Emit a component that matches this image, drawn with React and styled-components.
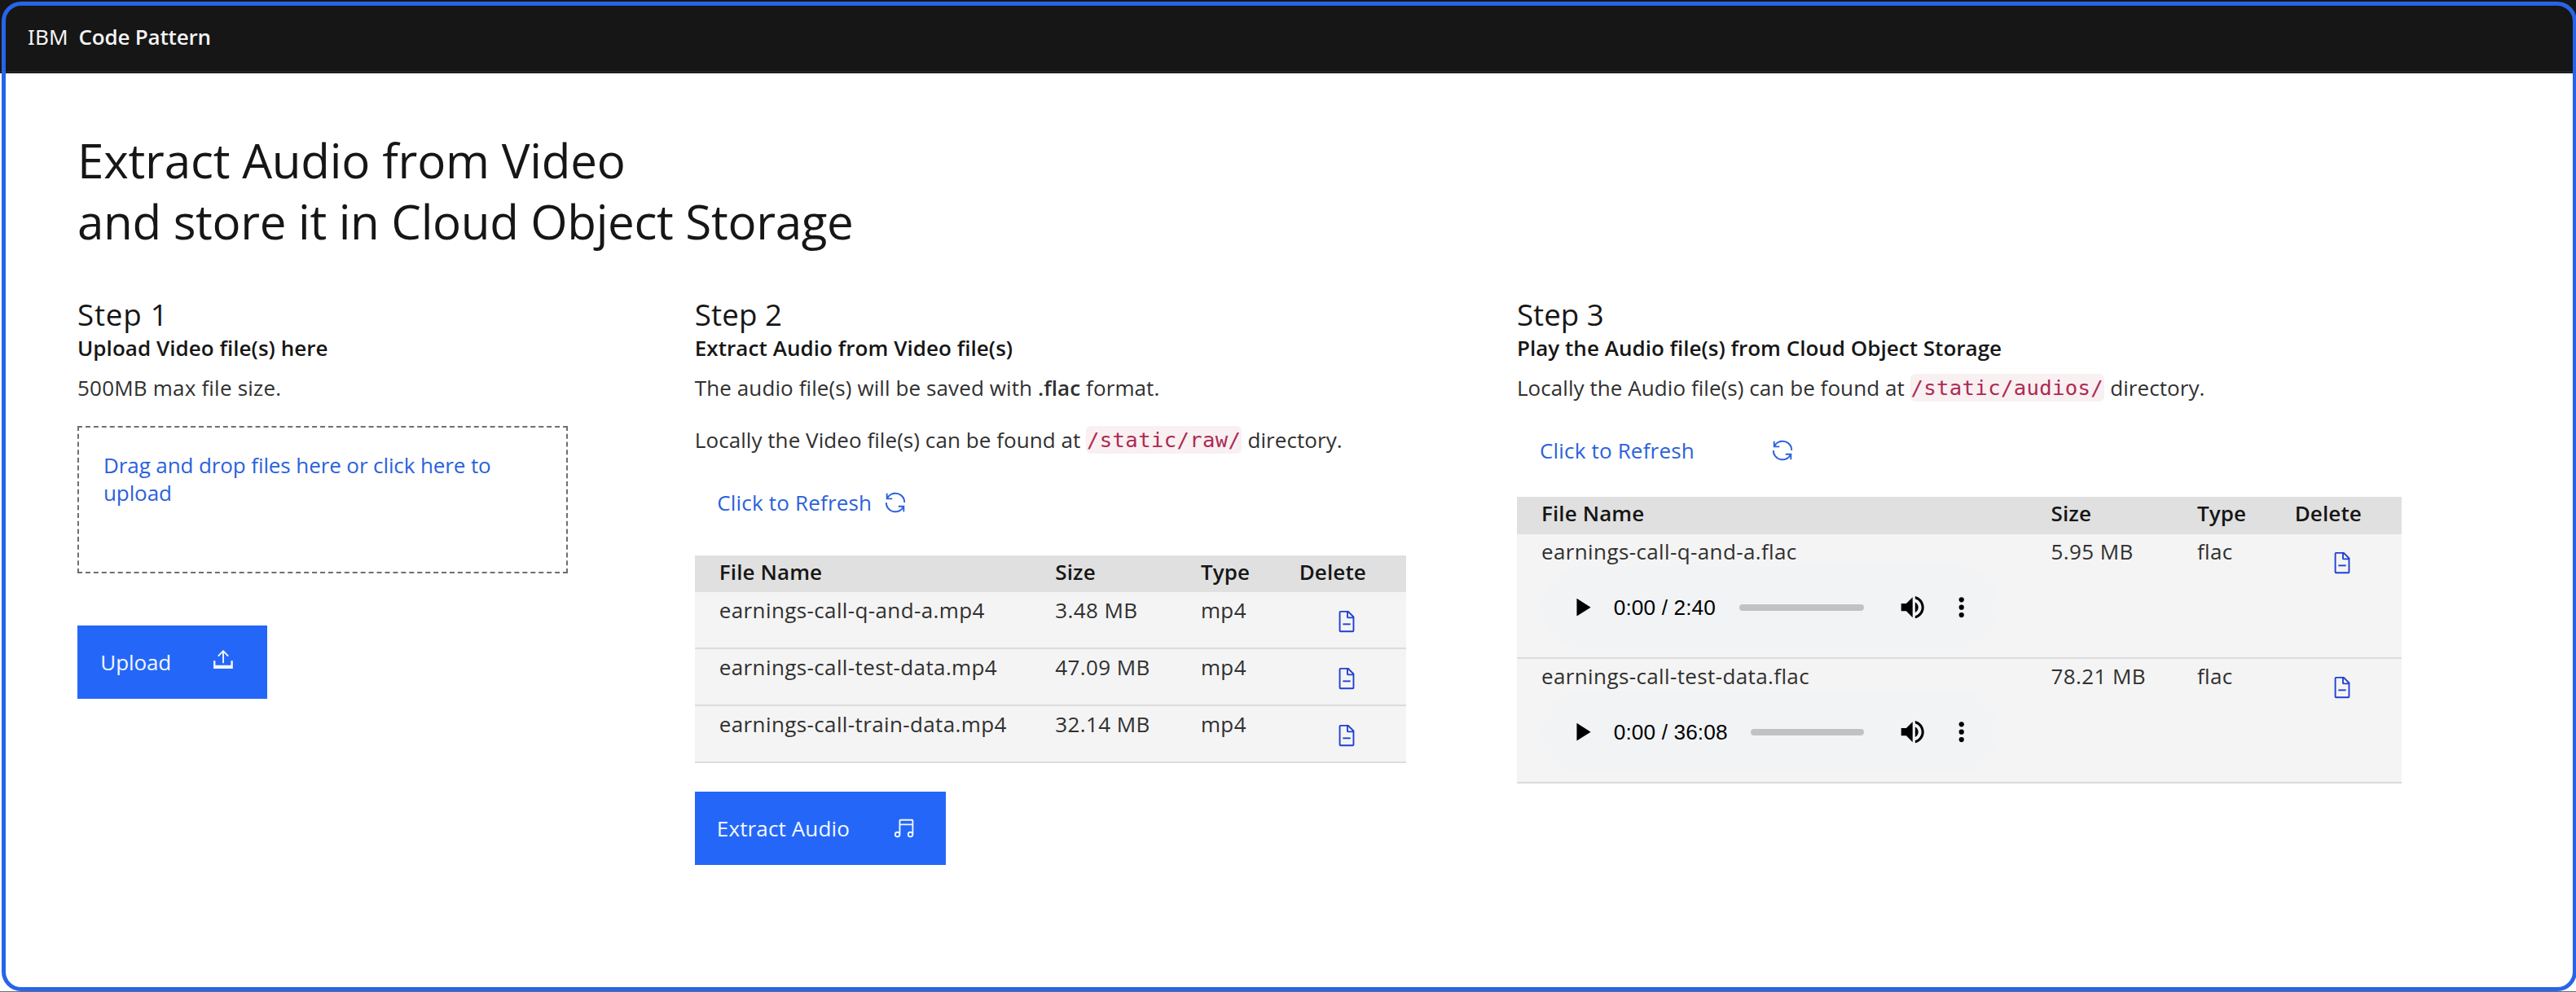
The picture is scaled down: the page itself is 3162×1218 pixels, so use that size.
import React from "react";
import styled, { createGlobalStyle } from "styled-components";

const GlobalStyle = createGlobalStyle`
  * { box-sizing: border-box; }
  body {
    margin: 0;
    background: #fff;
    color: #161616;
    font: 400 26px/34px "Open Sans", "Noto Sans", sans-serif;
  }
  h1, h2, h3, p { margin: 0; font-weight: 400; }
`;

const Page = styled.div`
  position: relative;
  width: 3162px;
  height: 1218px;
  overflow: hidden;
  background: #fff;
  border-bottom: 1px solid #6a6f78;
`;

const WindowOutline = styled.div`
  position: absolute;
  inset: 1.5px -1px 0 1.5px;
  border: 5px solid #2765e8;
  border-radius: 24px;
  pointer-events: none;
`;

const Header = styled.header`
  display: flex;
  height: 90px;
  padding: 28px 0 0 34px;
  background: #161616;
  border-bottom: 1px solid #000;
  box-shadow: inset 0 -1px 0 #393939;
  color: #f4f4f4;
`;

const Brand = styled.span`
  width: 62.5px;
  font-family: "Noto Sans", sans-serif;
  letter-spacing: 0.1px;
`;

const Product = styled.span`
  font-weight: 600;
  letter-spacing: -0.19px;
`;

const Main = styled.main`
  padding: 68.5px 0 0 95px;
`;

const Title = styled.h1`
  font-size: 58.3px;
  line-height: 75px;
  letter-spacing: ${(p) => p.$ls}px;
`;

const Steps = styled.div`
  display: flex;
  align-items: flex-start;
  margin-top: 54px;
`;

const Step = styled.section`
  flex: none;
  width: ${(p) => p.$w}px;
  margin-right: ${(p) => p.$gap || 0}px;
`;

const StepName = styled.h2`
  font-size: 36.7px;
  line-height: 46px;
  letter-spacing: ${(p) => p.$ls}px;
`;

const Subtitle = styled.h3`
  margin-top: 1.6px;
  font-size: 26px;
  font-weight: 600;
  letter-spacing: ${(p) => p.$ls}px;
`;

const Text = styled.p`
  margin-top: ${(p) => p.$mt || 14.8}px;
  color: #303030;
  white-space: nowrap;
  letter-spacing: ${(p) => p.$ls || 0.06}px;

  b { font-weight: 600; letter-spacing: 0.1px; }
`;

const Code = styled.code`
  display: inline-block;
  margin: 0 0.5px 0 0;
  padding: 0 1px;
  border-radius: 6px;
  background: #f9f0f2;
  color: #ad2a52;
  font: 400 25.6px/34px "DejaVu Sans Mono", monospace;
  letter-spacing: 0.35px;
  vertical-align: bottom;
`;

const DropZone = styled.div`
  width: 602px;
  height: 180.5px;
  margin-top: 30.5px;
  padding: 30px 20px 0 30px;
  border: 2px dashed #6f6f6f;
  color: #2b62da;
  line-height: 33.5px;
  letter-spacing: -0.1px;
`;

const Button = styled.button`
  display: flex;
  align-items: center;
  width: ${(p) => p.$w}px;
  height: 90px;
  margin: ${(p) => p.$mt}px 0 0;
  padding: 0 0 0 ${(p) => p.$pl}px;
  border: 0;
  background: #2467f8;
  color: #f1f7ff;
  font: inherit;
  letter-spacing: ${(p) => p.$ls}px;
`;

const GhostButton = styled(Button)`
  background: transparent;
  color: #2b62da;
`;

const ButtonLabel = styled.span`
  width: ${(p) => p.$w}px;
  text-align: left;
  white-space: nowrap;
`;

const Icon = styled.svg`
  display: block;
  flex: none;
  width: ${(p) => p.$size || 30}px;
  height: ${(p) => p.$size || 30}px;
  fill: currentColor;
  overflow: visible;
`;

const LiftedIcon = styled(Icon)`
  margin-bottom: 6px;
`;

const Table = styled.div`
  width: ${(p) => p.$w}px;
  margin-top: ${(p) => p.$mt}px;
`;

const Row = styled.div`
  display: grid;
  grid-template-columns: ${(p) => p.$cols};
  height: ${(p) => p.$h}px;
  padding: 4.5px 0 0 30px;
  background: #f4f4f4;
  border-bottom: 2px solid #dcdcdc;
  color: #303030;
  letter-spacing: 0.38px;
  white-space: nowrap;
`;

const HeadRow = styled(Row)`
  height: 45.5px;
  padding-top: 3px;
  background: #e0e0e0;
  border-bottom: 0;
  color: #161616;
  font-weight: 600;
  letter-spacing: 0.12px;
`;

const DeleteCell = styled.div`
  padding: 16px 0 0 43.5px;
  color: #1f3fd2;
`;

const Player = styled.div`
  display: flex;
  align-items: center;
  width: 561px;
  height: 101px;
  margin-top: 1px;
  margin-left: 1px;
  padding: 0 27.3px 0 29.6px;
  border-radius: 51px;
  background: #f1f3f4;
  color: #000;
`;

const Time = styled.span`
  margin: 0 28.8px 0 20.8px;
  font: 400 26.2px/34px "Liberation Sans", Arial, sans-serif;
  letter-spacing: 0.13px;
`;

const Track = styled.div`
  flex: 1;
  height: 7.5px;
  margin-right: 41.3px;
  border-radius: 4px;
  background: #c1c2c3;
`;

const VolumeSlot = styled.div`
  margin-right: 22.6px;
`;

const RenewIcon = () => (
  <Icon viewBox="0 0 32 32">
    <path d="M12 10H6.78A11 11 0 0 1 27 16h2A13 13 0 0 0 6 7.68V4H4v8h8zM20 22h5.22A11 11 0 0 1 5 16H3a13 13 0 0 0 23 8.32V28h2v-8h-8z" />
  </Icon>
);

const UploadIcon = () => (
  <LiftedIcon viewBox="0 0 30 30">
    <path d="M3 16.2h2.4v5.6h19v-5.6h2.4v9.8H3z" />
    <path d="M15 19.3V4.6M8.8 10.6L15 4.4l6.2 6.2" fill="none" stroke="currentColor" strokeWidth="1.9" />
  </LiftedIcon>
);

const MusicIcon = () => (
  <Icon viewBox="0 0 32 32">
    <path d="M25 4H10a2 2 0 0 0-2 2v14.56A3.91 3.91 0 0 0 6 20a4 4 0 1 0 4 4V12h15v8.56A3.91 3.91 0 0 0 23 20a4 4 0 1 0 4 4V6a2 2 0 0 0-2-2zM6 26a2 2 0 1 1 2-2 2 2 0 0 1-2 2zm17 0a2 2 0 1 1 2-2 2 2 0 0 1-2 2zM10 6h15v4H10z" />
  </Icon>
);

const DocumentIcon = () => (
  <Icon viewBox="0 0 32 32">
    <path d="M25.7 9.3l-7-7A.91.91 0 0 0 18 2H8a2 2 0 0 0-2 2v24a2 2 0 0 0 2 2h16a2 2 0 0 0 2-2V10a.91.91 0 0 0-.3-.7zM18 4.4l5.6 5.6H18zM24 28H8V4h8v6a2 2 0 0 0 2 2h6z" />
    <path d="M11 18.6h10v2H11z" />
  </Icon>
);

const PlayIcon = () => (
  <Icon viewBox="0 0 24 24" $size={37.4}>
    <path d="M8 5v14l11-7z" />
  </Icon>
);

const VolumeIcon = () => (
  <Icon viewBox="0 0 24 24" $size={37.4}>
    <path d="M3 9v6h4l5 5V4L7 9H3zm13.5 3c0-1.77-1.02-3.29-2.5-4.03v8.05c1.48-.73 2.5-2.25 2.5-4.02zM14 3.23v2.06c2.89.86 5 3.54 5 6.71s-2.11 5.85-5 6.71v2.06c4.01-.91 7-4.49 7-8.77s-2.99-7.86-7-8.77z" />
  </Icon>
);

const MoreIcon = () => (
  <Icon viewBox="0 0 24 24" $size={37.4}>
    <circle cx="12" cy="6" r="2" />
    <circle cx="12" cy="12" r="2" />
    <circle cx="12" cy="18" r="2" />
  </Icon>
);

const videos = [
  { name: "earnings-call-q-and-a.mp4", size: "3.48 MB" },
  { name: "earnings-call-test-data.mp4", size: "47.09 MB" },
  { name: "earnings-call-train-data.mp4", size: "32.14 MB" },
];

const audios = [
  { name: "earnings-call-q-and-a.flac", size: "5.95 MB", time: "0:00 / 2:40" },
  { name: "earnings-call-test-data.flac", size: "78.21 MB", time: "0:00 / 36:08" },
];

const VIDEO_COLUMNS = "412.5px 178.6px 120.8px 1fr";
const AUDIO_COLUMNS = "625.6px 179.3px 119.8px 1fr";

function FileTable({ files, type, columns, width, top, rowHeight }) {
  return (
    <Table $w={width} $mt={top}>
      <HeadRow $cols={columns}>
        <span>File Name</span>
        <span>Size</span>
        <span>Type</span>
        <span>Delete</span>
      </HeadRow>
      {files.map((f) => (
        <Row key={f.name} $cols={columns} $h={rowHeight}>
          <div>
            {f.name}
            {f.time && (
              <Player>
                <PlayIcon />
                <Time>{f.time}</Time>
                <Track />
                <VolumeSlot><VolumeIcon /></VolumeSlot>
                <MoreIcon />
              </Player>
            )}
          </div>
          <span>{f.size}</span>
          <span>{type}</span>
          <DeleteCell><DocumentIcon /></DeleteCell>
        </Row>
      ))}
    </Table>
  );
}

export default function App() {
  return (
    <Page>
      <GlobalStyle />
      <Header>
        <Brand>IBM</Brand>
        <Product>Code Pattern</Product>
      </Header>
      <Main>
        <Title $ls={-0.2}>Extract Audio from Video</Title>
        <Title $ls={-0.33}>and store it in Cloud Object Storage</Title>
        <Steps>
          <Step $w={602} $gap={155.8}>
            <StepName $ls={0.8}>Step 1</StepName>
            <Subtitle $ls={0.05}>Upload Video file(s) here</Subtitle>
            <Text $ls={0.2}>500MB max file size.</Text>
            <DropZone>Drag and drop files here or click here to upload</DropZone>
            <Button $w={233} $mt={64.5} $pl={28.3} $ls={-0.1}>
              <ButtonLabel $w={135.7}>Upload</ButtonLabel>
              <UploadIcon />
            </Button>
          </Step>
          <Step $w={873.5} $gap={135.7}>
            <StepName $ls={0.1}>Step 2</StepName>
            <Subtitle $ls={0.06}>Extract Audio from Video file(s)</Subtitle>
            <Text $ls={0.1}>
              The audio file(s) will be saved with <b>.flac</b> format.
            </Text>
            <Text $mt={30}>
              Locally the Video file(s) can be found at <Code>/static/raw/</Code> directory.
            </Text>
            <GhostButton $w={300} $mt={15} $pl={27.5} $ls={0.18}>
              <ButtonLabel $w={204.2}>Click to Refresh</ButtonLabel>
              <RenewIcon />
            </GhostButton>
            <FileTable files={videos} type="mp4" columns={VIDEO_COLUMNS} width={873.5} top={20} rowHeight={70} />
            <Button $w={308.7} $mt={34.5} $pl={27} $ls={0.14}>
              <ButtonLabel $w={215.8}>Extract Audio</ButtonLabel>
              <MusicIcon />
            </Button>
          </Step>
          <Step $w={1086.2}>
            <StepName $ls={0}>Step 3</StepName>
            <Subtitle $ls={0.02}>Play the Audio file(s) from Cloud Object Storage</Subtitle>
            <Text>
              Locally the Audio file(s) can be found at <Code>/static/audios/</Code> directory.
            </Text>
            <GhostButton $w={380} $mt={15} $pl={28} $ls={0.18}>
              <ButtonLabel $w={282.6}>Click to Refresh</ButtonLabel>
              <RenewIcon />
            </GhostButton>
            <FileTable files={audios} type="flac" columns={AUDIO_COLUMNS} width={1086.2} top={12.4} rowHeight={153} />
          </Step>
        </Steps>
      </Main>
      <WindowOutline />
    </Page>
  );
}
